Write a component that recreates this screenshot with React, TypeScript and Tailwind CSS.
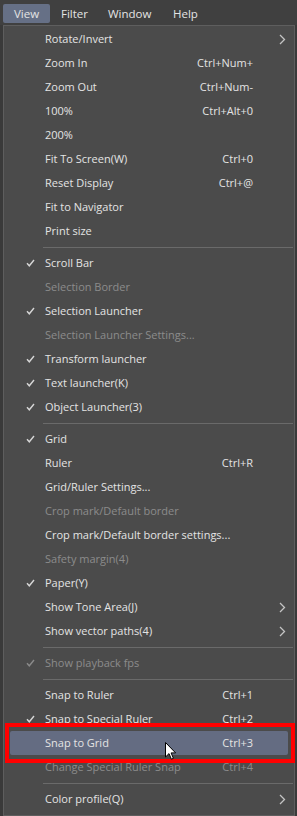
import React from "react";

type Item =
  | { sep: true }
  | {
      sep?: false;
      label: string;
      shortcut?: string;
      checked?: boolean;
      disabled?: boolean;
      submenu?: boolean;
      hover?: boolean;
    };

const items: Item[] = [
  { label: "Rotate/Invert", submenu: true },
  { label: "Zoom In", shortcut: "Ctrl+Num+" },
  { label: "Zoom Out", shortcut: "Ctrl+Num-" },
  { label: "100%", shortcut: "Ctrl+Alt+0" },
  { label: "200%" },
  { label: "Fit To Screen(W)", shortcut: "Ctrl+0" },
  { label: "Reset Display", shortcut: "Ctrl+@" },
  { label: "Fit to Navigator" },
  { label: "Print size" },
  { sep: true },
  { label: "Scroll Bar", checked: true },
  { label: "Selection Border", disabled: true },
  { label: "Selection Launcher", checked: true },
  { label: "Selection Launcher Settings...", disabled: true },
  { label: "Transform launcher", checked: true },
  { label: "Text launcher(K)", checked: true },
  { label: "Object Launcher(3)", checked: true },
  { sep: true },
  { label: "Grid", checked: true },
  { label: "Ruler", shortcut: "Ctrl+R" },
  { label: "Grid/Ruler Settings..." },
  { label: "Crop mark/Default border", disabled: true },
  { label: "Crop mark/Default border settings..." },
  { label: "Safety margin(4)", disabled: true },
  { label: "Paper(Y)", checked: true },
  { label: "Show Tone Area(J)", submenu: true },
  { label: "Show vector paths(4)", submenu: true },
  { sep: true },
  { label: "Show playback fps", checked: true, disabled: true },
  { sep: true },
  { label: "Snap to Ruler", shortcut: "Ctrl+1" },
  { label: "Snap to Special Ruler", shortcut: "Ctrl+2", checked: true },
  { label: "Snap to Grid", shortcut: "Ctrl+3", hover: true },
  { label: "Change Special Ruler Snap", shortcut: "Ctrl+4", disabled: true },
  { sep: true },
  { label: "Color profile(Q)", submenu: true },
];

function Check({ dim }: { dim?: boolean }) {
  return (
    <svg width="9" height="8" viewBox="0 0 9 8" className="block">
      <path
        d="M1 4.2 L3.3 6.8 L8 1"
        fill="none"
        stroke={dim ? "#8a8a8a" : "#d6d6d6"}
        strokeWidth="1.4"
      />
    </svg>
  );
}

function Chevron() {
  return (
    <svg width="7" height="11" viewBox="0 0 7 11" className="block">
      <path d="M1 1 L5.5 5.5 L1 10" fill="none" stroke="#c4c4c4" strokeWidth="1.3" />
    </svg>
  );
}

export default function App() {
  return (
    <div
      className="relative w-[297px] h-[816px] overflow-hidden bg-[#3a3a3a] text-[11px] text-[#e4e4e4]"
      style={{ fontFamily: '"Open Sans", "Noto Sans", sans-serif' }}
    >
      {/* menubar */}
      <div className="h-[25px] bg-[#404040] flex items-start pt-[4px] pl-[3px] text-[11.5px]">
        <div className="h-[19px] w-[47px] shrink-0 rounded-[2px] bg-[#667086] flex items-center pl-[11px] leading-none">
          View
        </div>
        <div className="h-[19px] w-[47px] shrink-0 flex items-center leading-none ml-[11px]">
          Filter
        </div>
        <div className="h-[19px] w-[65px] shrink-0 flex items-center leading-none">Window</div>
        <div className="h-[19px] flex items-center leading-none">Help</div>
      </div>

      {/* dropdown */}
      <div className="ml-[3px] w-[292px] h-[791px] bg-[#4b4b4b] border border-[#5e5e5e] pt-[1px]">
        {items.map((it, i) =>
          it.sep ? (
            <div key={i} className="h-[8px] flex items-center pl-[39px] pr-[1px]">
              <div className="h-px w-full bg-[#6a6a6a]" />
            </div>
          ) : (
            <div
              key={i}
              className={
                "h-[24px] mx-[6px] flex items-center rounded-[2px] " +
                (it.hover ? "bg-[#646c82] " : "") +
                (it.disabled ? "text-[#8b8b8b]" : "text-[#e4e4e4]")
              }
            >
              <div className="w-[35px] shrink-0 flex justify-end pr-[10px]">
                {it.checked ? <Check dim={it.disabled} /> : null}
              </div>
              <div className="flex-1 min-w-0 whitespace-nowrap leading-none pb-[1px]">{it.label}</div>
              <div className="shrink-0 text-right whitespace-nowrap leading-none pb-[1px]">
                {it.shortcut ?? ""}
              </div>
              <div className="w-[35px] shrink-0 flex justify-end pr-[2px]">
                {it.submenu ? <Chevron /> : null}
              </div>
            </div>
          )
        )}
      </div>

      {/* red highlight box */}
      <div className="absolute left-[5px] top-[723px] w-[290px] h-[40px] border-[4px] border-[#ff0000] pointer-events-none" />

      {/* mouse cursor */}
      <svg
        className="absolute left-[165px] top-[742px]"
        width="12"
        height="19"
        viewBox="0 0 12 19"
      >
        <path
          d="M0.5 0.5 L0.5 15 L4 11.6 L6.4 17.2 L8.4 16.3 L6.1 10.9 L10.6 10.9 Z"
          fill="#ffffff"
          stroke="#000000"
          strokeWidth="1"
        />
      </svg>
    </div>
  );
}
